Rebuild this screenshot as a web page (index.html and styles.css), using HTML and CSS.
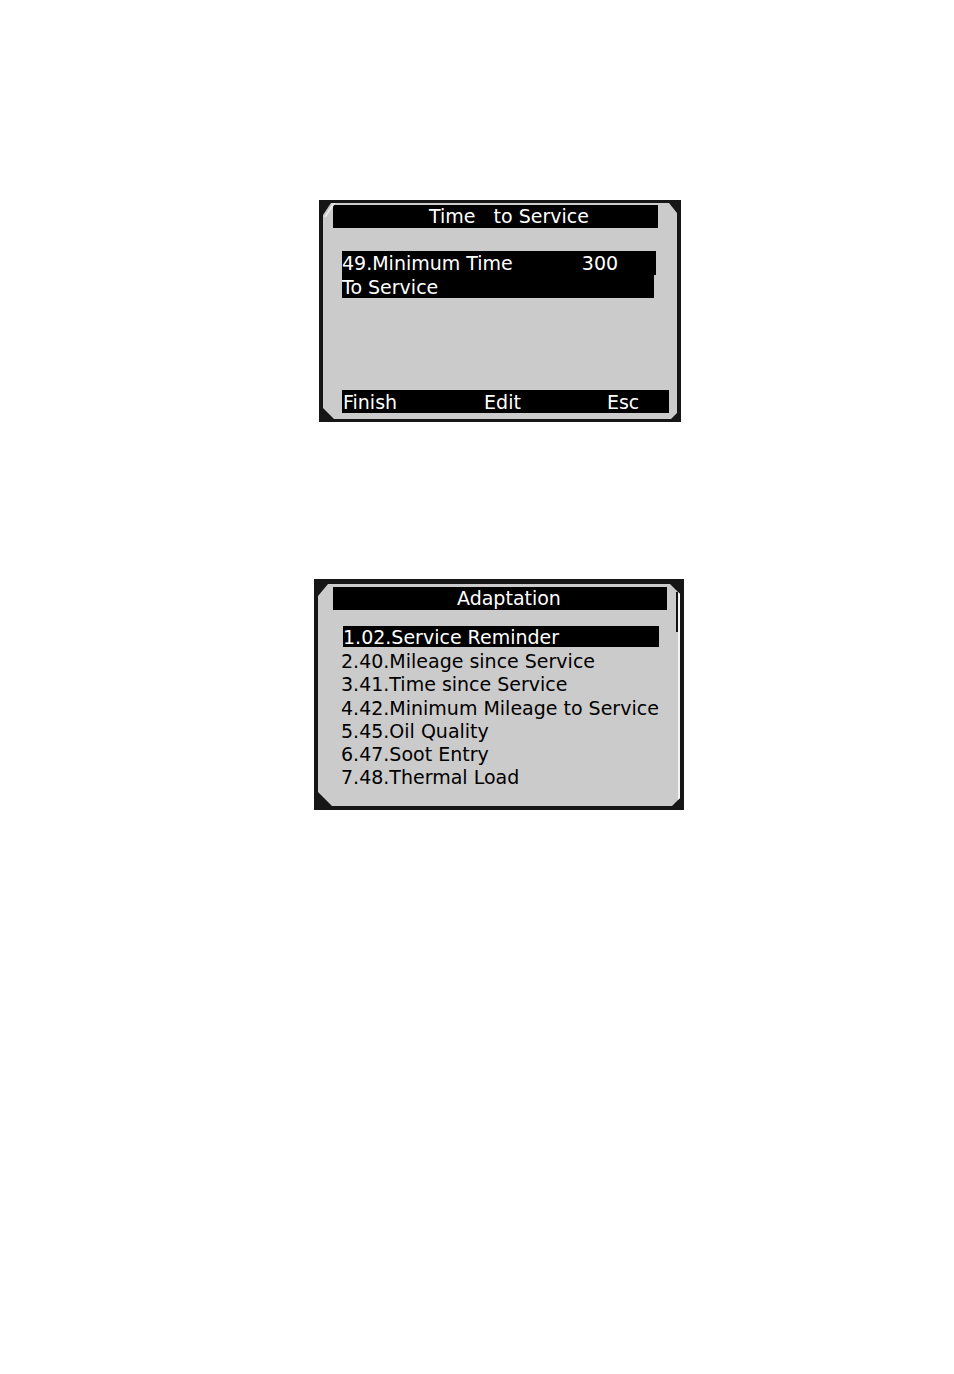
FILE: index.html
```html
<!DOCTYPE html>
<html>
<head>
<meta charset="utf-8">
<link rel="stylesheet" href="styles.css">
</head>
<body>
<div class="page">
  <div class="screen screen-one">
    <div class="panel panel-one">
      <div class="title title-one"><span>Time   to Service</span></div>
      <div class="selected-block">
        <div class="sel-line sel-line-a"><span>49.Minimum Time</span><span class="val">300</span></div>
        <div class="sel-line sel-line-b"><span>To Service</span></div>
      </div>
      <div class="spacer"></div>
      <div class="footer">
        <span class="f-finish">Finish</span>
        <span class="f-edit">Edit</span>
        <span class="f-esc">Esc</span>
      </div>
    </div>
  </div>

  <div class="screen screen-two">
    <div class="panel panel-two">
      <div class="title title-two"><span>Adaptation</span></div>
      <div class="scroll"></div>
      <ul class="menu">
        <li class="active">1.02.Service Reminder</li>
        <li>2.40.Mileage since Service</li>
        <li>3.41.Time since Service</li>
        <li>4.42.Minimum Mileage to Service</li>
        <li>5.45.Oil Quality</li>
        <li>6.47.Soot Entry</li>
        <li>7.48.Thermal Load</li>
      </ul>
    </div>
  </div>
</div>
</body>
</html>
```

FILE: styles.css
```css
html, body {
  margin: 0;
  padding: 0;
  background: #ffffff;
}
body {
  font-family: "DejaVu Sans", Verdana, sans-serif;
  font-size: 19px;
  color: #000;
}
.page {
  display: flex;
  flex-direction: column;
  align-items: flex-start;
  padding-top: 200px;
  height: 1174px;
}
.screen {
  background: #161616;
  box-sizing: border-box;
}
.screen-one {
  margin-left: 319px;
  width: 362px;
  height: 222px;
  padding: 3px 4px 3px 4px;
}
.screen-two {
  margin-left: 314px;
  margin-top: 157px;
  width: 370px;
  height: 231px;
  padding: 5px 4px 4px 4px;
}
.panel {
  background: #cccbcb;
  height: 100%;
  box-sizing: border-box;
  position: relative;
  display: flex;
  flex-direction: column;
  color: #fff;
}
.panel-one {
  clip-path: polygon(0 12px, 8px 0, calc(100% - 8px) 0, 100% 10px, 100% calc(100% - 6px), calc(100% - 6px) 100%, 11px 100%, 0 calc(100% - 11px));
  padding: 2px 0 6px 0;
}
.panel-one::before {
  content: "";
  position: absolute;
  left: 1px;
  top: 0;
  width: 2px;
  height: 14px;
  background: #eeeeee;
  transform: skewX(-34deg);
  transform-origin: bottom left;
}
.panel-two {
  clip-path: polygon(0 12px, 10px 0, calc(100% - 10px) 0, 100% 10px, 100% calc(100% - 8px), calc(100% - 8px) 100%, 14px 100%, 0 calc(100% - 14px));
  padding: 3px 0 0 0;
  box-shadow: inset -2px 0 0 #f4f4f4;
}
.title {
  background: #000;
  color: #fff;
  white-space: pre;
  height: 23px;
  line-height: 23px;
}
.title-one {
  margin-left: 10px;
  width: 325px;
  padding-left: 96px;
  box-sizing: border-box;
}
.title-two {
  margin-left: 15px;
  width: 334px;
  padding-left: 124px;
  box-sizing: border-box;
}
.selected-block {
  margin-top: 23px;
  margin-left: 19px;
}
.sel-line {
  background: #000;
  height: 23.5px;
  line-height: 25px;
  display: flex;
  white-space: nowrap;
}
.sel-line-a {
  width: 314px;
}
.sel-line-b {
  width: 312px;
}
.val {
  margin-left: 69px;
}
.spacer {
  flex: 1;
}
.footer {
  margin-left: 19px;
  width: 327px;
  height: 23px;
  line-height: 25px;
  background: #000;
  display: flex;
  padding-left: 1px;
  box-sizing: border-box;
  overflow: hidden;
}
.f-edit {
  margin-left: 87px;
}
.f-esc {
  margin-left: 86px;
}
.scroll {
  position: absolute;
  right: 2px;
  top: 8px;
  width: 2px;
  height: 40px;
  background: #111;
}
.menu {
  list-style: none;
  margin: 16px 0 0 23px;
  padding: 0;
  color: #000;
}
.menu li {
  height: 23.3px;
  line-height: 25px;
  white-space: nowrap;
}
.menu li.active {
  background: #000;
  color: #fff;
  width: 316px;
  margin-left: 2px;
  height: 21px;
  line-height: 22px;
  margin-bottom: 2px;
}
```
